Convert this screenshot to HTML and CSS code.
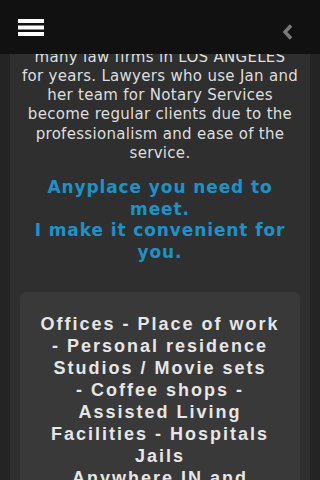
FILE: index.html
```html
<!DOCTYPE html>
<html>
<head>
<meta charset="utf-8">
<link rel="stylesheet" href="styles.css">
</head>
<body>
<header class="topbar">
  <button class="menu-btn" aria-label="Menu">
    <svg width="26" height="18" viewBox="0 0 26 18"><rect x="0" y="0" width="26" height="4" fill="#fff"/><rect x="0" y="6.5" width="26" height="4" fill="#fff"/><rect x="0" y="13" width="26" height="4" fill="#fff"/></svg>
  </button>
  <span class="back">
    <svg width="12" height="16" viewBox="0 0 12 16"><path d="M9 1.5 L3 8 L9 14.5" fill="none" stroke="#7a7a7a" stroke-width="3.4"/></svg>
  </span>
</header>
<main class="panel">
  <p class="intro">Jan has been the trusted<br>Notary Public of choice for<br>many law firms in LOS ANGELES<br>for years. Lawyers who use Jan and<br>her team for Notary Services<br>become regular clients due to the<br>professionalism and ease of the<br>service.</p>
  <h2 class="headline">Anyplace you need to<br>meet.<br>I make it convenient for<br>you.</h2>
  <div class="places">
    <p>Offices - Place of work<br>- Personal residence<br>Studios / Movie sets<br>- Coffee shops -<br>Assisted Living<br>Facilities - Hospitals<br>Jails<br>Anywhere IN and<br>around Los Angeles</p>
  </div>
</main>
</body>
</html>
```
FILE: styles.css
```css
html, body {
  margin: 0;
  padding: 0;
  background: #242424;
}
body {
  padding: 0 10px;
  font-family: "DejaVu Sans", Verdana, sans-serif;
}
.topbar {
  position: fixed;
  top: 0;
  left: 0;
  right: 0;
  height: 54px;
  background: #111111;
  display: flex;
  align-items: center;
  justify-content: space-between;
  z-index: 10;
}
.menu-btn {
  background: none;
  border: 0;
  padding: 0;
  margin: 2px 0 0 18px;
  line-height: 0;
}
.back {
  margin: 10px 26px 0 0;
  line-height: 0;
}
.panel {
  background: #2f2f2f;
  padding: 9px 10px 20px;
}
.intro {
  margin: 0;
  color: #dedede;
  font-size: 15px;
  letter-spacing: 0.3px;
  line-height: 19.3px;
  text-align: center;
  white-space: nowrap;
}
.headline {
  margin: 14px 0 0;
  color: #1a93c9;
  font-size: 17px;
  letter-spacing: 0.9px;
  line-height: 21.4px;
  font-weight: 700;
  text-align: center;
  white-space: nowrap;
}
.places {
  margin-top: 29px;
  background: #393939;
  border-radius: 6px;
  padding: 21px 10px;
}
.places p {
  margin: 0;
  color: #e6e6e6;
  font-family: "Liberation Sans", Arial, sans-serif;
  font-weight: 700;
  font-size: 18px;
  line-height: 22px;
  letter-spacing: 2px;
  text-align: center;
  white-space: nowrap;
}
```
